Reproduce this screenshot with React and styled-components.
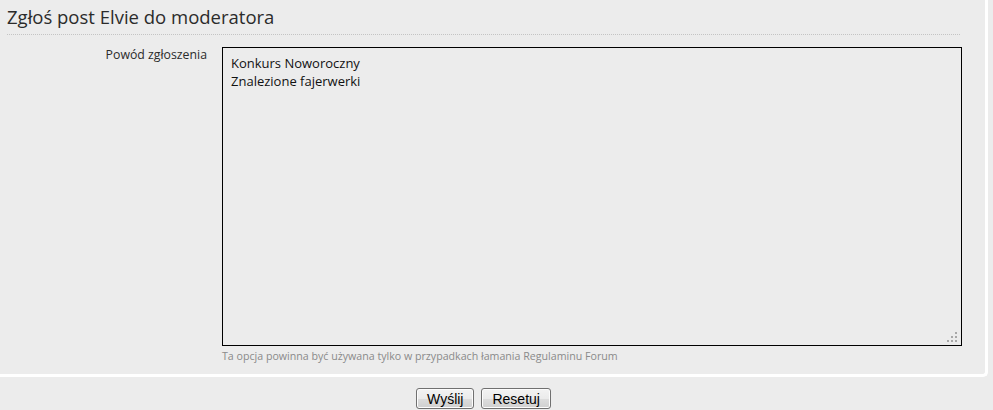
import React, { useState } from "react";
import styled, { createGlobalStyle } from "styled-components";

const GlobalStyle = createGlobalStyle`
  body {
    margin: 0;
    background: #ececec;
    font-family: "Open Sans", "DejaVu Sans", sans-serif;
    color: #333;
  }
`;

const Page = styled.div`
  width: 993px;
  height: 410px;
  overflow: hidden;
  background: #ececec;
`;

const Panel = styled.div`
  width: 953px;
  padding: 0 25px 0 7px;
  border-right: 3px solid #fff;
  border-bottom: 3px solid #fff;
  border-bottom-right-radius: 5px;
  height: 374px;
  box-sizing: content-box;
`;

const Title = styled.h2`
  margin: 0;
  padding-top: 4px;
  height: 30px;
  font-weight: normal;
  font-size: 18.5px;
  line-height: 26px;
  color: #2b2b2b;
  border-bottom: 1px dotted #c4c4c4;
`;

const Row = styled.div`
  display: flex;
  margin-top: 12px;
  gap: 15px;
`;

const Label = styled.label`
  width: 200px;
  flex: none;
  text-align: right;
  font-size: 12.3px;
  line-height: 16px;
  color: #2b2b2b;
`;

const Field = styled.div`
  display: flex;
  flex-direction: column;
`;

const Box = styled.div`
  position: relative;
  width: 740px;
  height: 299px;
`;

const Message = styled.textarea`
  display: block;
  width: 100%;
  height: 100%;
  box-sizing: border-box;
  margin: 0;
  padding: 6px 8px;
  border: 1px solid #000;
  background: #ececec;
  font-family: "Open Sans", "DejaVu Sans", sans-serif;
  font-size: 13px;
  line-height: 18px;
  color: #111;
  resize: none;
  outline: none;
`;

const Grip = styled.svg`
  position: absolute;
  right: 5px;
  bottom: 4px;
  pointer-events: none;
`;

const Hint = styled.span`
  font-size: 10.65px;
  line-height: 16px;
  color: #8a8a8a;
  padding-top: 2px;
`;

const Buttons = styled.div`
  display: flex;
  justify-content: center;
  gap: 7px;
  padding: 11px 26px 0 0;
`;

const Button = styled.button`
  height: 21px;
  padding: 0 10px;
  font-family: "Liberation Sans", Arial, sans-serif;
  font-size: 14px;
  color: #000;
  border: 1px solid #707070;
  border-radius: 3px;
  background: linear-gradient(#f3f3f3 0%, #ebebeb 50%, #dddddd 51%, #cfcfcf 100%);
  box-shadow: inset 0 0 0 1px #fcfcfc;
  cursor: pointer;
`;

export default function App() {
  const initial = "Konkurs Noworoczny\nZnalezione fajerwerki";
  const [reason, setReason] = useState(initial);

  return (
    <Page>
      <GlobalStyle />
      <Panel>
        <Title>Zgłoś post Elvie do moderatora</Title>
        <Row>
          <Label htmlFor="reason">Powód zgłoszenia</Label>
          <Field>
            <Box>
              <Message id="reason" value={reason} onChange={e => setReason(e.target.value)} />
              <Grip width="10" height="10" viewBox="0 0 10 10">
                <g fill="#a8a8a8">
                  <rect x="8" y="0" width="2" height="2" />
                  <rect x="4" y="4" width="2" height="2" />
                  <rect x="8" y="4" width="2" height="2" />
                  <rect x="0" y="8" width="2" height="2" />
                  <rect x="4" y="8" width="2" height="2" />
                  <rect x="8" y="8" width="2" height="2" />
                </g>
              </Grip>
            </Box>
            <Hint>Ta opcja powinna być używana tylko w przypadkach łamania Regulaminu Forum</Hint>
          </Field>
        </Row>
      </Panel>
      <Buttons>
        <Button type="submit">Wyślij</Button>
        <Button type="reset" onClick={() => setReason(initial)}>Resetuj</Button>
      </Buttons>
    </Page>
  );
}
